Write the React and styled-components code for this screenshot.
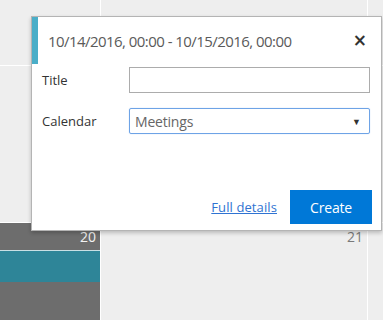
import React from "react";
import styled, { createGlobalStyle } from "styled-components";

const Global = createGlobalStyle`
  html, body {
    margin: 0;
    padding: 0;
    width: 383px;
    height: 320px;
    overflow: hidden;
    font-family: "Open Sans", "Noto Sans", sans-serif;
  }
`;

const Page = styled.div`
  position: relative;
  width: 383px;
  height: 320px;
  overflow: hidden;
`;

const Grid = styled.div`
  display: grid;
  grid-template-columns: 100px 266px 1fr;
  grid-template-rows: 65px 156px 1fr;
  gap: 1px;
  background: #ffffff;
  width: 100%;
  height: 100%;
`;

const Cell = styled.div`
  position: relative;
  background: ${(p) => (p.dark ? "#6d6d6d" : "#eeeeee")};
  display: flex;
  flex-direction: column;
`;

const DayNum = styled.div`
  align-self: flex-end;
  padding: 6px 4px 0 0;
  font-size: 14px;
  line-height: 16px;
  color: ${(p) => (p.dark ? "#f2f2f2" : "#7a7a7a")};
`;

const EventBar = styled.div`
  margin-top: 5px;
  height: 31px;
  background: #2e8598;
  border-top: 1px solid #c9dfe4;
`;

const Popup = styled.div`
  position: absolute;
  left: 31px;
  top: 16px;
  width: 349px;
  height: 213px;
  background: #ffffff;
  border: 1px solid #b4b4b4;
  box-shadow: 0 2px 4px rgba(0, 0, 0, 0.22);
  display: flex;
  flex-direction: column;
`;

const Header = styled.div`
  display: flex;
  align-items: center;
  height: 47px;
  border-left: 6px solid #4aaec8;
  padding: 0 14px 0 10px;
`;

const HeaderTitle = styled.div`
  flex: 1;
  font-size: 15px;
  letter-spacing: -0.55px;
  color: #5a5a5a;
  white-space: nowrap;
`;

const Close = styled.div`
  font-family: "DejaVu Sans", sans-serif;
  font-size: 17px;
  font-weight: bold;
  color: #333333;
  line-height: 1;
`;

const Form = styled.div`
  display: flex;
  flex-direction: column;
  gap: 15px;
  padding: 3px 11px 0 10px;
`;

const Row = styled.div`
  display: grid;
  grid-template-columns: 87px 1fr;
  align-items: center;
`;

const Label = styled.label`
  font-size: 13px;
  color: #333333;
`;

const Input = styled.div`
  box-sizing: border-box;
  height: 26px;
  border: 1px solid ${(p) => (p.focused ? "#6ea3e6" : "#acacac")};
  border-radius: ${(p) => (p.focused ? "2px" : "0")};
  box-shadow: ${(p) => (p.focused ? "0 0 1px #9cc3f0" : "none")};
  display: flex;
  align-items: center;
  padding: 0 8px 0 5px;
  font-size: 14px;
  color: #666666;
`;

const SelectText = styled.span`
  flex: 1;
  letter-spacing: -0.2px;
`;

const Arrow = styled.span`
  font-size: 9px;
  color: #333333;
`;

const Footer = styled.div`
  margin-top: auto;
  display: flex;
  align-items: center;
  justify-content: flex-end;
  gap: 13px;
  padding: 0 9px 6px 0;
`;

const Link = styled.a`
  font-size: 13px;
  color: #2f73d2;
  text-decoration: underline;
  letter-spacing: 0.1px;
`;

const Button = styled.button`
  width: 82px;
  height: 34px;
  border: none;
  background: #0078d7;
  color: #ffffff;
  font-family: "Open Sans", sans-serif;
  font-size: 14px;
  letter-spacing: -0.2px;
  padding: 0;
`;

export default function App() {
  return (
    <Page>
      <Global />
      <Grid>
        <Cell />
        <Cell />
        <Cell />
        <Cell />
        <Cell />
        <Cell />
        <Cell dark>
          <DayNum dark>20</DayNum>
          <EventBar />
        </Cell>
        <Cell>
          <DayNum>21</DayNum>
        </Cell>
        <Cell />
      </Grid>
      <Popup>
        <Header>
          <HeaderTitle>10/14/2016, 00:00 - 10/15/2016, 00:00</HeaderTitle>
          <Close>×</Close>
        </Header>
        <Form>
          <Row>
            <Label>Title</Label>
            <Input />
          </Row>
          <Row>
            <Label>Calendar</Label>
            <Input focused>
              <SelectText>Meetings</SelectText>
              <Arrow>▼</Arrow>
            </Input>
          </Row>
        </Form>
        <Footer>
          <Link>Full details</Link>
          <Button>Create</Button>
        </Footer>
      </Popup>
    </Page>
  );
}
